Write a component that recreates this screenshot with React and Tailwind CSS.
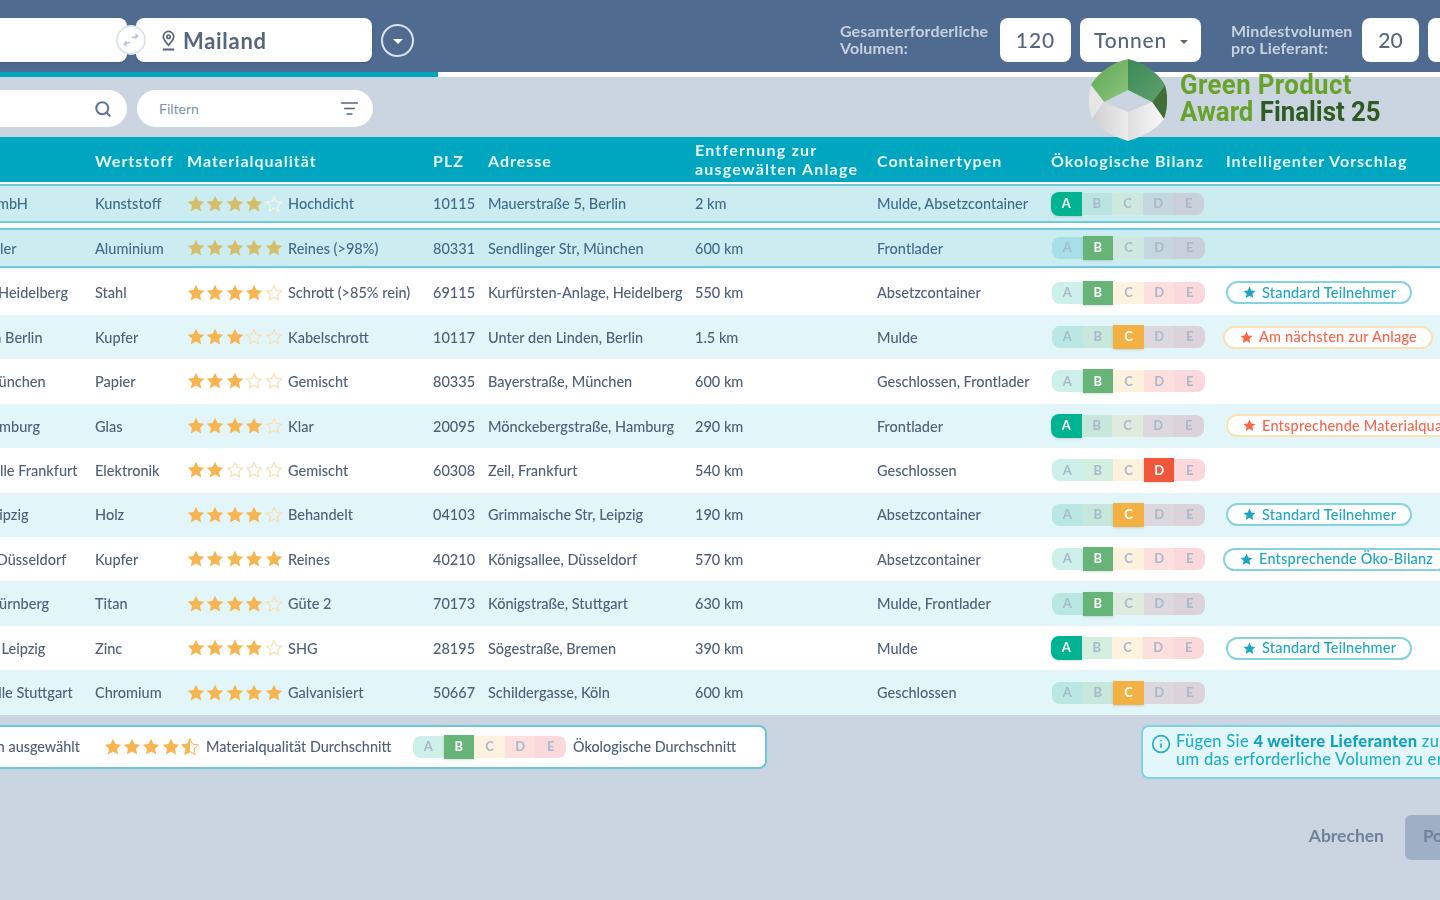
import { Info, ListFilter, Search } from "lucide-react";

const rowGrid = "grid grid-cols-[175px_92px_246px_55px_207px_182px_174px_175px_240px] items-center";

const rows = [
  { name: "Plastwerk GmbH", stoff: "Kunststoff", stars: 4, qual: "Hochdicht", plz: "10115", addr: "Mauerstraße 5, Berlin", dist: "2 km", cont: "Mulde, Absetzcontainer", eco: "A", selected: true },
  { name: "Alu-Bau Müller", stoff: "Aluminium", stars: 5, qual: "Reines (>98%)", plz: "80331", addr: "Sendlinger Str, München", dist: "600 km", cont: "Frontlader", eco: "B", selected: true },
  { name: "Stahlhandel Heidelberg", stoff: "Stahl", stars: 4, qual: "Schrott (>85% rein)", plz: "69115", addr: "Kurfürsten-Anlage, Heidelberg", dist: "550 km", cont: "Absetzcontainer", eco: "B", badge: ["Standard Teilnehmer", "teal"] },
  { name: "Kupferhallen Berlin", stoff: "Kupfer", stars: 3, qual: "Kabelschrott", plz: "10117", addr: "Unter den Linden, Berlin", dist: "1.5 km", cont: "Mulde", eco: "C", badge: ["Am nächsten zur Anlage", "orange"] },
  { name: "Papierhof München", stoff: "Papier", stars: 3, qual: "Gemischt", plz: "80335", addr: "Bayerstraße, München", dist: "600 km", cont: "Geschlossen, Frontlader", eco: "B" },
  { name: "Glashaus Hamburg", stoff: "Glas", stars: 4, qual: "Klar", plz: "20095", addr: "Mönckebergstraße, Hamburg", dist: "290 km", cont: "Frontlader", eco: "A", badge: ["Entsprechende Materialqualität", "orange"] },
  { name: "Elektronikhalle Frankfurt", stoff: "Elektronik", stars: 2, qual: "Gemischt", plz: "60308", addr: "Zeil, Frankfurt", dist: "540 km", cont: "Geschlossen", eco: "D" },
  { name: "Holzwerk Leipzig", stoff: "Holz", stars: 4, qual: "Behandelt", plz: "04103", addr: "Grimmaische Str, Leipzig", dist: "190 km", cont: "Absetzcontainer", eco: "C", badge: ["Standard Teilnehmer", "teal"] },
  { name: "Kupferhaus Düsseldorf", stoff: "Kupfer", stars: 5, qual: "Reines", plz: "40210", addr: "Königsallee, Düsseldorf", dist: "570 km", cont: "Absetzcontainer", eco: "B", badge: ["Entsprechende Öko-Bilanz", "teal"] },
  { name: "Titanwerk Nürnberg", stoff: "Titan", stars: 4, qual: "Güte 2", plz: "70173", addr: "Königstraße, Stuttgart", dist: "630 km", cont: "Mulde, Frontlader", eco: "B" },
  { name: "Zinkrecycler Leipzig", stoff: "Zinc", stars: 4, qual: "SHG", plz: "28195", addr: "Sögestraße, Bremen", dist: "390 km", cont: "Mulde", eco: "A", badge: ["Standard Teilnehmer", "teal"] },
  { name: "Galvanik-Halle Stuttgart", stoff: "Chromium", stars: 5, qual: "Galvanisiert", plz: "50667", addr: "Schildergasse, Köln", dist: "600 km", cont: "Geschlossen", eco: "C" },
];

const ecoColors = {
  white: { A: "bg-[#cdf1ea]", B: "bg-[#d3efdf]", C: "bg-[#fdf2de]", D: "bg-[#fde0dd]", E: "bg-[#fbd8dc]" },
  tint: { A: "bg-[#b9e8e2]", B: "bg-[#c7e7dc]", C: "bg-[#dfebdc]", D: "bg-[#dcd8de]", E: "bg-[#dcd2da]" },
  sel: { A: "bg-[#a6e0e6]", B: "bg-[#bae4de]", C: "bg-[#cfe8df]", D: "bg-[#c6d6de]", E: "bg-[#c9d0da]" },
};

const ecoActive = {
  A: "bg-[#00b491] rounded-l-lg -ml-[1px]",
  B: "bg-[#66b477]",
  C: "bg-[#f3b143]",
  D: "bg-[#f0563a]",
  E: "bg-[#e0475a]",
};

const starPoints = "9,0.8 11.5,6.1 17.3,6.8 13,10.7 14.2,16.5 9,13.6 3.8,16.5 5,10.7 0.7,6.8 6.5,6.1";

function StarIcon({ className, half }) {
  return (
    <svg viewBox="0 0 18 18" className={className}>
      {half ? (
        <>
          <polygon points="9,0.8 9,13.6 3.8,16.5 5,10.7 0.7,6.8 6.5,6.1" fill="currentColor" />
          <polygon points={starPoints} fill="none" stroke="currentColor" strokeWidth="1" />
        </>
      ) : (
        <polygon points={starPoints} fill="currentColor" />
      )}
    </svg>
  );
}

function Stars({ count, selected }) {
  const full = selected ? "text-[#d6bd6c]" : "text-[#f6b550]";
  const empty = selected ? "text-[#f2f6e8]" : "text-[#f8dfb4]";
  return (
    <div className="flex w-[101px] shrink-0 gap-[1.4px]">
      {[1, 2, 3, 4, 5].map((n) =>
        n <= count ? (
          <StarIcon key={n} className={`h-[18px] w-[18px] ${full}`} />
        ) : (
          <svg key={n} viewBox="0 0 18 18" className={`h-[18px] w-[18px] ${empty}`}>
            <polygon points="9,1.6 11.2,6.5 16.4,7.1 12.5,10.6 13.6,15.8 9,13.2 4.4,15.8 5.5,10.6 1.6,7.1 6.8,6.5" fill="none" stroke="currentColor" strokeWidth="1.2" />
          </svg>
        ),
      )}
    </div>
  );
}

function EcoPill({ active, palette }) {
  return (
    <div className="ml-[1px] flex h-[22px] w-[153px] items-center text-[13px] font-bold">
      {["A", "B", "C", "D", "E"].map((l, i) => (
        <div
          key={l}
          className={`flex w-[30.6px] items-center justify-center ${
            i === 0 ? "rounded-l-lg" : i === 4 ? "rounded-r-lg" : ""
          } ${
            l === active
              ? `h-[24px] text-white shadow-sm ${ecoActive[l]}`
              : `h-[22px] text-[#a9b8ca] ${ecoColors[palette][l]}`
          }`}
        >
          {l}
        </div>
      ))}
    </div>
  );
}

function Badge({ label, tone }) {
  const teal = tone === "teal";
  const standard = label === "Standard Teilnehmer" || label.includes("Material");
  return (
    <div
      className={`flex h-[23px] w-fit shrink-0 items-center justify-center gap-[6px] rounded-full border-2 bg-white pl-[15px] pr-[14px] text-[14.5px] font-medium tracking-[0.2px] whitespace-nowrap ${
        standard ? "" : "-ml-[3px]"
      } ${teal ? "border-[#86d3e0] text-[#1ba7c2]" : "border-[#fbe0b8] text-[#f6664d]"}`}
    >
      <StarIcon className="h-[13px] w-[13px] shrink-0" />
      {label}
    </div>
  );
}

function Row({ row, index }) {
  const palette = row.selected ? "sel" : index % 2 === 0 ? "white" : "tint";
  const bg = index % 2 === 0 ? "bg-white" : "bg-[#e2f5f8]";
  const cells = (
    <div className={`${rowGrid} h-full text-[14.5px] font-medium whitespace-nowrap ${row.selected ? "text-[#436a8a]" : "text-[#4f6079]"}`}>
      <div className="overflow-hidden pt-[1px]">{row.name}</div>
      <div className="pt-[1px]">{row.stoff}</div>
      <div className="flex items-center">
        <Stars count={row.stars} selected={row.selected} />
        <span className="pt-[1px]">{row.qual}</span>
      </div>
      <div className="pt-[1px]">{row.plz}</div>
      <div className="pt-[1px]">{row.addr}</div>
      <div className="pt-[1px]">{row.dist}</div>
      <div className="pt-[1px]">{row.cont}</div>
      <EcoPill active={row.eco} palette={palette} />
      {row.badge ? <Badge label={row.badge[0]} tone={row.badge[1]} /> : <div />}
    </div>
  );

  if (row.selected) {
    return (
      <div className="h-[44.45px] bg-white py-[2.5px]">
        <div className="h-full border-y-2 border-[#6ccbdb] bg-[#cbedf1]">{cells}</div>
      </div>
    );
  }
  return <div className={`h-[44.45px] ${bg}`}>{cells}</div>;
}

function AwardLogo() {
  return (
    <div className="absolute left-[1089px] top-[59px] flex items-start gap-[13px]">
      <svg viewBox="0 0 78 82" className="h-[82px] w-[78px] shrink-0">
        <defs>
          <linearGradient id="leafLeft" x1="0" y1="0" x2="1" y2="1">
            <stop offset="0" stopColor="#5fa752" />
            <stop offset="1" stopColor="#8cc47e" />
          </linearGradient>
          <linearGradient id="leafRight" x1="0" y1="0" x2="1" y2="1">
            <stop offset="0" stopColor="#3c8a5a" />
            <stop offset="1" stopColor="#5fa06b" />
          </linearGradient>
          <linearGradient id="greyLeft" x1="0" y1="0" x2="1" y2="0">
            <stop offset="0" stopColor="#cfcfcf" />
            <stop offset="1" stopColor="#ececec" />
          </linearGradient>
          <linearGradient id="greyRight" x1="0" y1="0" x2="1" y2="0">
            <stop offset="0" stopColor="#dedede" />
            <stop offset="1" stopColor="#f8f8f8" />
          </linearGradient>
        </defs>
        <path d="M39 0C25 3 10 12 2 26L15 43L39 31Z" fill="url(#leafLeft)" />
        <path d="M39 0C53 3 68 12 76 26L63 43L39 31Z" fill="url(#leafRight)" />
        <path d="M76 26C79 36 79 48 75 60L63 43Z" fill="#3f7038" />
        <path d="M2 26C-1 36 -1 48 3 60L15 43Z" fill="#e6e6e6" />
        <path d="M15 43L39 53V82C25 78 10 70 3 60Z" fill="url(#greyLeft)" />
        <path d="M63 43L39 53V82C53 78 68 70 75 60Z" fill="url(#greyRight)" />
      </svg>
      <div className="mt-[13px] origin-left scale-x-[0.955] font-['Roboto',sans-serif] text-[27px] font-bold leading-[27px] whitespace-nowrap">
        <div className="tracking-[0.4px] text-[#67a32a]">Green Product</div>
        <div className="text-[#67a32a]">
          Award <span className="text-[#2f5a22]">Finalist 25</span>
        </div>
      </div>
    </div>
  );
}

export default function App() {
  return (
    <div className="relative h-[900px] w-[1440px] overflow-hidden bg-[#cbd5e1] font-['Lato',sans-serif]">
      <div className="blur-[0.7px]">
        {/* Top bar */}
        <div className="-ml-[100px] flex h-[72px] w-[1640px] items-center bg-[#4f6b90] pt-[8px]">
          <div className="relative h-[44px] w-[227px] shrink-0 rounded-lg bg-white shadow">
            <div className="absolute -right-[19px] top-[7px] flex h-[30px] w-[30px] items-center justify-center rounded-full border-2 border-[#dde4ec] bg-white text-[#b9c6d6]">
              <svg viewBox="0 0 20 20" className="h-[18px] w-[18px]" fill="none" stroke="currentColor" strokeWidth="1.8">
                <path d="M9 12.5L2.5 14.5M5 11.5L2.5 14.5L5.5 16.5" />
                <path d="M11 7.5L17.5 5.5M15 3.5L17.5 5.5L14.5 8.5" />
              </svg>
            </div>
          </div>
          <div className="ml-[9px] flex h-[44px] w-[236px] shrink-0 items-center gap-[5px] rounded-lg bg-white pl-[23px] text-[22px] font-bold tracking-[0.7px] text-[#56667e] shadow">
            <svg viewBox="0 0 20 22" className="h-[21px] w-[19px]" fill="none" stroke="currentColor" strokeWidth="1.8">
              <path d="M10 16C7 12.5 4.5 10 4.5 7a5.5 5.5 0 0 1 11 0c0 3-2.5 5.5-5.5 9Z" />
              <circle cx="10" cy="7" r="1.8" />
              <path d="M4 20.5H16" strokeWidth="2.2" />
            </svg>
            Mailand
          </div>
          <div className="ml-[9px] flex h-[33px] w-[33px] shrink-0 items-center justify-center rounded-full border-2 border-[#dbe3ec]">
            <div className="mt-[2px] h-0 w-0 border-x-[5px] border-t-[5px] border-x-transparent border-t-white" />
          </div>
          <div className="ml-[426px] -mt-[2px] w-[160px] shrink-0 text-[16px] font-bold leading-[17px] tracking-[0.1px] text-[#c6d1df]">
            Gesamterforderliche
            <br />
            Volumen:
          </div>
          <div className="flex h-[44px] w-[71px] shrink-0 items-center justify-center rounded-lg bg-white text-[21px] font-medium tracking-[1px] text-[#56667e]">120</div>
          <div className="ml-[9px] flex h-[44px] w-[121px] shrink-0 items-center justify-between rounded-lg bg-white pl-[14px] pr-[13px] text-[21px] font-medium tracking-[0.8px] text-[#56667e]">
            Tonnen
            <div className="mt-[3px] h-0 w-0 border-x-[4px] border-t-[4px] border-x-transparent border-t-[#56667e]" />
          </div>
          <div className="ml-[30px] -mt-[2px] w-[131px] shrink-0 text-[16px] font-bold leading-[17px] tracking-[0.1px] text-[#c6d1df]">
            Mindestvolumen
            <br />
            pro Lieferant:
          </div>
          <div className="flex h-[44px] w-[57px] shrink-0 items-center justify-center rounded-lg bg-white text-[21px] font-medium text-[#56667e]">20</div>
          <div className="ml-[9px] h-[44px] w-[60px] shrink-0 rounded-lg bg-white" />
        </div>

        {/* Progress */}
        <div className="flex h-[5px] bg-white">
          <div className="w-[438px] bg-[#00a5c0]" />
        </div>

        {/* Search and filter */}
        <div className="-ml-[100px] flex h-[60px] w-[573px] items-center gap-[10px] pt-[3px]">
          <div className="flex h-[37px] w-[227px] shrink-0 items-center justify-end rounded-full bg-white pr-[15px] text-[#5f7590]">
            <Search size={18} strokeWidth={2.6} />
          </div>
          <div className="flex h-[37px] w-[236px] shrink-0 items-center justify-between rounded-full bg-white pl-[22px] pr-[14px] text-[14px] text-[#8193aa]">
            Filtern
            <ListFilter size={19} className="text-[#56667e]" />
          </div>
        </div>

        {/* Table */}
        <div className="-ml-[80px] w-[1546px]">
          <div className={`${rowGrid} h-[44.5px] bg-[#00a5c0] pt-[3px] text-[16px] font-bold leading-[19px] tracking-[1px] text-[#e4f6f9]`}>
            <div />
            <div>Wertstoff</div>
            <div>Materialqualität</div>
            <div>PLZ</div>
            <div>Adresse</div>
            <div className="-mt-[4px] tracking-[1.2px]">
              Entfernung zur
              <br />
              ausgewälten Anlage
            </div>
            <div>Containertypen</div>
            <div>Ökologische Bilanz</div>
            <div>Intelligenter Vorschlag</div>
          </div>
          {rows.map((row, i) => (
            <Row key={row.name} row={row} index={i} />
          ))}
        </div>

        {/* Summary and hint */}
        <div className="-ml-[100px] mt-[10px] flex w-[1640px] items-start">
          <div className="flex h-[44px] w-[867px] shrink-0 items-center rounded-r-lg border-2 border-[#6cc6d8] bg-white text-[14.4px] font-medium text-[#4f6079]">
            <span className="w-[178px] shrink-0 text-right">Lieferanten ausgewählt</span>
            <div className="ml-[24px] flex w-[102px] shrink-0 gap-[1.2px] text-[#f6b550]">
              {[1, 2, 3, 4].map((n) => (
                <StarIcon key={n} className="h-[18px] w-[18px]" />
              ))}
              <StarIcon half className="h-[18px] w-[18px]" />
            </div>
            <span className="w-[206px] shrink-0">Materialqualität Durchschnitt</span>
            <EcoPill active="B" palette="white" />
            <span className="ml-[7px]">Ökologische Durchschnitt</span>
          </div>
          <div className="ml-[374px] flex h-[54px] w-[420px] shrink-0 items-center gap-[7px] rounded-lg border-2 border-[#7fd3e0] bg-[#e3f6fa] pb-[3px] pl-[8px] text-[16.5px] font-medium leading-[18px] tracking-[0.3px] whitespace-nowrap text-[#1fb0c8]">
            <Info size={20} className="mb-[12px] shrink-0" />
            <div className="-ml-[2px]">
              Fügen Sie <span className="font-black text-[#11a3bd]">4 weitere Lieferanten</span> zur Auswahl hinzu,
              <br />
              um das erforderliche Volumen zu erreichen
            </div>
          </div>
        </div>

        {/* Actions */}
        <div className="-mr-[60px] mt-[36px] flex items-center justify-end">
          <span className="pb-[3px] text-[17.5px] font-bold text-[#6f829c]">Abrechen</span>
          <div className="ml-[21px] flex h-[45px] w-[95px] items-center rounded-md bg-[#9fb0c6] pb-[3px] pl-[18px] text-[17px] font-bold text-[#6f829c]">
            Posten
          </div>
        </div>
      </div>

      <AwardLogo />
    </div>
  );
}
